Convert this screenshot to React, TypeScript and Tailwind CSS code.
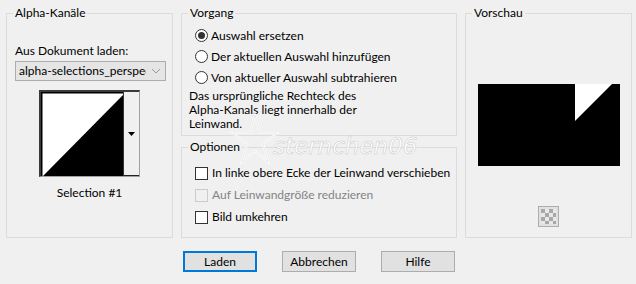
import type { ReactNode } from "react"

function Group({ title, className, children }: { title: string; className: string; children?: ReactNode }) {
  return (
    <fieldset className={`min-w-0 shrink-0 border border-[#dcdcdc] ${className}`}>
      <legend className="ml-[6px] px-[2px] leading-[16px]">{title}</legend>
      {children}
    </fieldset>
  )
}

function Radio({ label, checked }: { label: string; checked?: boolean }) {
  return (
    <div className="flex items-center h-[21px] whitespace-nowrap">
      <span className="w-[13px] h-[13px] rounded-full border border-[#333] bg-white flex items-center justify-center">
        {checked && <span className="w-[7px] h-[7px] rounded-full bg-[#333]" />}
      </span>
      <span className="ml-[3px]">{label}</span>
    </div>
  )
}

function Check({ label, disabled }: { label: string; disabled?: boolean }) {
  return (
    <div className="flex items-center h-[22px] whitespace-nowrap">
      <span className={`w-[13px] h-[13px] border ${disabled ? "border-[#cccccc] bg-[#f0f0f0]" : "border-[#333] bg-white"}`} />
      <span className={`ml-[4px] ${disabled ? "text-[#838383]" : ""}`}>{label}</span>
    </div>
  )
}

function Button({ label, primary }: { label: string; primary?: boolean }) {
  return (
    <button
      className={`w-[74px] h-[21px] bg-[#e1e1e1] leading-none ${
        primary ? "border-2 border-[#0078d7]" : "border border-[#adadad]"
      }`}
    >
      {label}
    </button>
  )
}

export default function App() {
  return (
    <div className="relative w-[636px] h-[284px] bg-[#f0f0f0] text-[12px] text-black pl-[6px] pt-[5px] overflow-hidden font-['Lato',sans-serif]">
      <div className="flex gap-[8px]">
        {/* Alpha-Kanäle */}
        <Group title="Alpha-Kanäle" className="w-[167px] h-[233px]">
          <div className="flex flex-col px-[8px]">
            <div className="mt-[22px] leading-[16px]">Aus Dokument laden:</div>
            <div className="mt-[2px] w-[151px] h-[20px] bg-[#e5e5e5] border border-[#adadad] flex items-center pl-[3px] pr-[4px]">
              <span className="flex-1 overflow-hidden whitespace-nowrap">alpha-selections_perspective</span>
              <svg width="10" height="6" viewBox="0 0 10 6" className="ml-[5px] shrink-0">
                <path d="M1 1 L5 5 L9 1" fill="none" stroke="#9a9a9a" strokeWidth="1" />
              </svg>
            </div>
            <div className="mt-[9px] self-center flex w-[101px] h-[87px] border-t-2 border-l-2 border-t-[#3a3a3a] border-l-[#3a3a3a] border-r border-b border-r-[#a0a0a0] border-b-[#a0a0a0]">
              <svg width="82" height="84" viewBox="0 0 82 84" className="shrink-0">
                <rect width="82" height="84" fill="#fff" />
                <polygon points="2,84 82,3 82,84" fill="#000" />
                <rect x="0" y="0" width="82" height="1.5" fill="#000" />
                <rect x="0" y="0" width="1.5" height="84" fill="#000" />
              </svg>
              <div className="flex-1 border-l border-[#333] bg-[#f0f0f0] flex items-center justify-center border-b border-b-[#222]">
                <svg width="7" height="4" viewBox="0 0 7 4">
                  <polygon points="0,0 7,0 3.5,4" fill="#000" />
                </svg>
              </div>
            </div>
            <div className="mt-[8px] text-center leading-[16px]">Selection #1</div>
          </div>
        </Group>

        {/* Middle column */}
        <div className="flex flex-col gap-[3px] shrink-0">
          <Group title="Vorgang" className="w-[276px] h-[131px]">
            <div className="flex flex-col pl-[13px] mt-[4px]">
              <Radio label="Auswahl ersetzen" checked />
              <Radio label="Der aktuellen Auswahl hinzufügen" />
              <Radio label="Von aktueller Auswahl subtrahieren" />
            </div>
            <div className="pl-[7px] mt-[1px] leading-[14px]">
              Das ursprüngliche Rechteck des
              <br />
              Alpha-Kanals liegt innerhalb der
              <br />
              Leinwand.
            </div>
          </Group>
          <Group title="Optionen" className="w-[276px] h-[99px]">
            <div className="flex flex-col pl-[13px] mt-[7px]">
              <Check label="In linke obere Ecke der Leinwand verschieben" />
              <Check label="Auf Leinwandgröße reduzieren" disabled />
              <Check label="Bild umkehren" />
            </div>
          </Group>
        </div>

        {/* Vorschau */}
        <Group title="Vorschau" className="w-[167px] h-[233px]">
          <div className="flex flex-col items-center">
            <svg width="142" height="82" viewBox="0 0 142 82" className="mt-[63px]">
              <rect width="142" height="82" fill="#000" />
              <polygon points="97,0 134,0 97,37" fill="#fff" />
            </svg>
            <div className="mt-[40px] w-[21px] h-[21px] border border-[#adadad] bg-[#e1e1e1] flex items-center justify-center">
              <svg width="15" height="15" viewBox="0 0 15 15">
                <rect width="15" height="15" fill="#e8e8e8" />
                <rect x="0" y="0" width="4" height="4" fill="#a8a8a8" />
                <rect x="8" y="0" width="4" height="4" fill="#a8a8a8" />
                <rect x="4" y="4" width="4" height="4" fill="#a8a8a8" />
                <rect x="12" y="4" width="3" height="4" fill="#a8a8a8" />
                <rect x="0" y="8" width="4" height="4" fill="#a8a8a8" />
                <rect x="8" y="8" width="4" height="4" fill="#a8a8a8" />
                <rect x="4" y="12" width="4" height="3" fill="#a8a8a8" />
                <rect x="12" y="12" width="3" height="3" fill="#a8a8a8" />
              </svg>
            </div>
          </div>
        </Group>
      </div>

      {/* Buttons */}
      <div className="flex gap-[25px] mt-[13px] pl-[177px]">
        <Button label="Laden" primary />
        <Button label="Abbrechen" />
        <Button label="Hilfe" />
      </div>

      {/* Watermark */}
      <svg width="48" height="52" viewBox="0 0 48 52" className="absolute left-[231px] top-[113px]">
        <polygon
          points="24,2 29,20 46,20 32,31 37,49 24,38 11,49 16,31 2,20 19,20"
          fill="none"
          stroke="#ffffff"
          strokeWidth="2"
        />
        <polygon
          points="24,2 29,20 46,20 32,31 37,49 24,38 11,49 16,31 2,20 19,20"
          fill="none"
          stroke="#d0d0d0"
          strokeWidth="0.5"
        />
      </svg>
      <span className="absolute left-[273px] top-[135px] italic text-[23px] leading-none text-white font-['DejaVu_Sans',sans-serif] font-extralight [-webkit-text-stroke:0.5px_#c8c8c8]">
        sternchen06
      </span>
    </div>
  )
}
